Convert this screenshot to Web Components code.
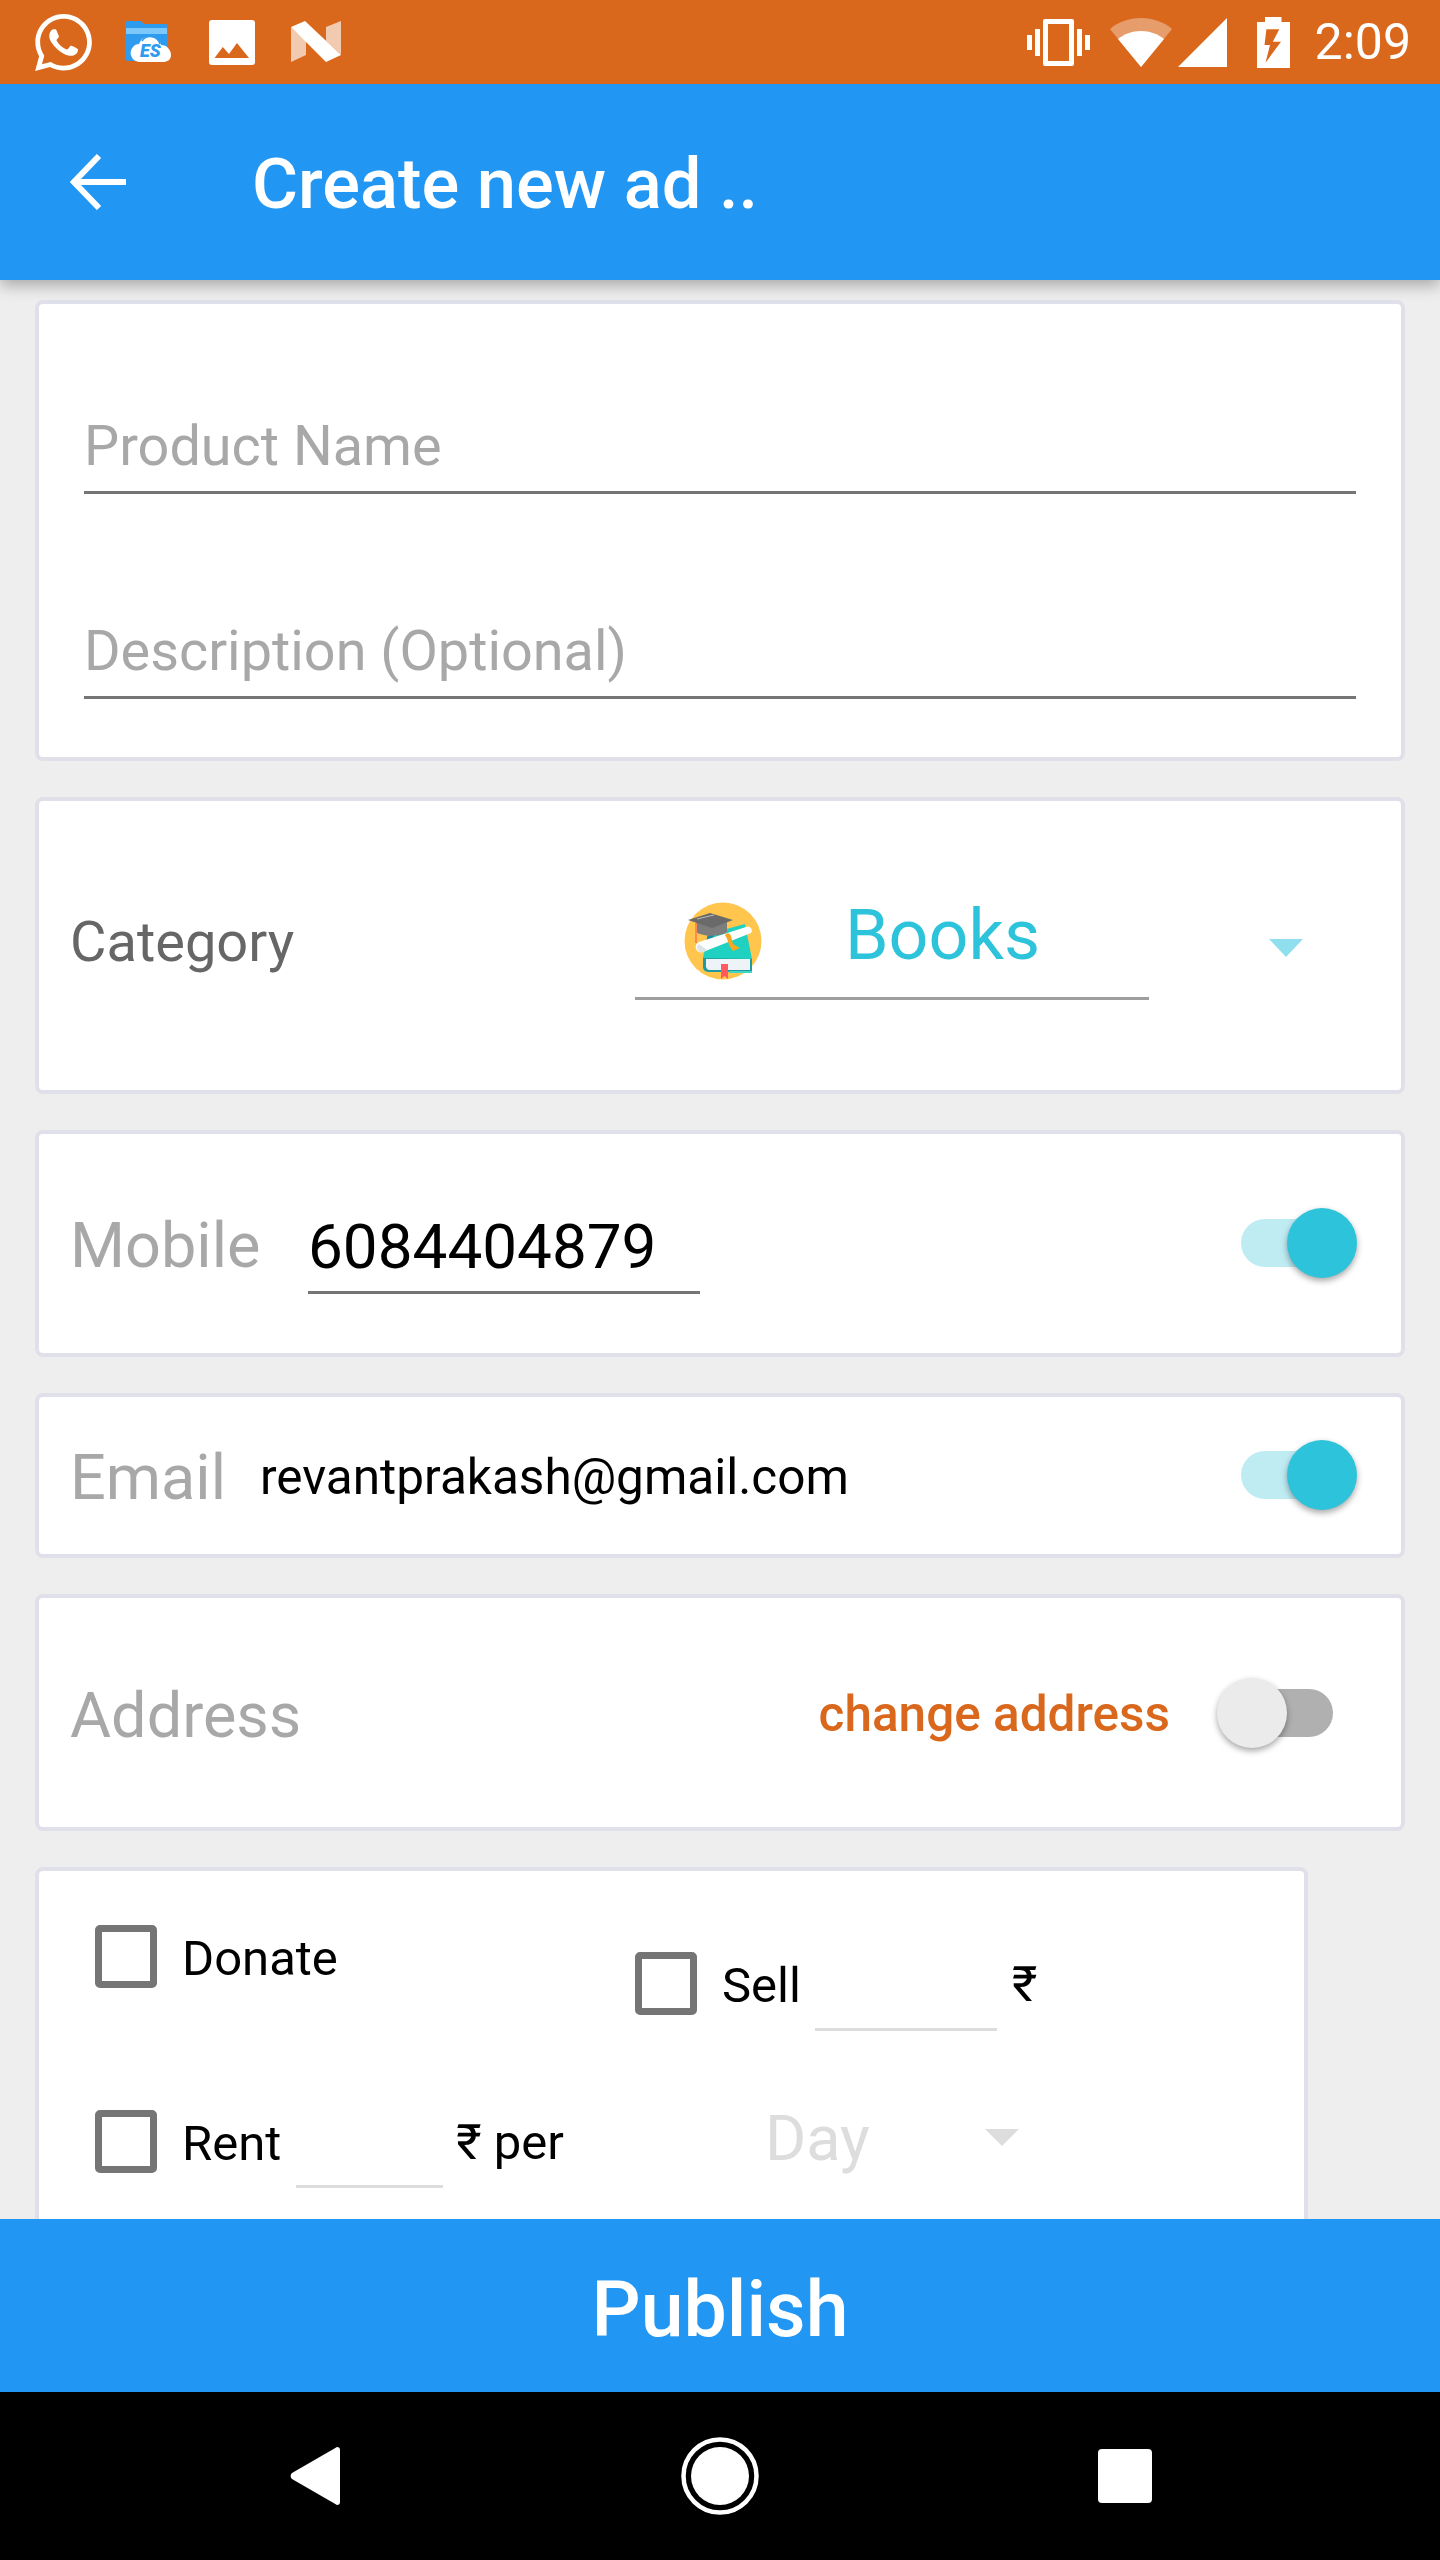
<!DOCTYPE html>
<html>
<head>
<meta charset="utf-8">
<style>
    html, body { margin: 0; padding: 0; background: #eee; }
    body { font-family: Roboto, "Noto Sans", sans-serif; }
    #phone { display: flex; flex-direction: column; width: 1440px; height: 2560px; overflow: hidden; }
    #scroll { flex: 1 1 0; min-height: 0; overflow: hidden; display: flex; flex-direction: column; gap: 36px; padding: 20px 35px 0 35px; }
</style>
</head>
<body>
<div id="phone">
    <status-bar></status-bar>
    <app-bar>Create new ad ..</app-bar>
    <div id="scroll">
        <form-card h="461">
            <text-field placeholder="Product Name" top="105"></text-field>
            <text-field placeholder="Description (Optional)" top="120"></text-field>
        </form-card>
        <category-card></category-card>
        <contact-row label="Mobile" h="227" mode="input" value="6084404879"></contact-row>
        <contact-row label="Email" h="165" mode="plain" value="revantprakash@gmail.com"></contact-row>
        <address-card></address-card>
        <offer-card></offer-card>
    </div>
    <publish-bar>Publish</publish-bar>
    <nav-bar></nav-bar>
</div>

<script>
class StatusBar extends HTMLElement {
    constructor() {
        super()
        const shadow = this.attachShadow({ mode: 'open' })
        shadow.innerHTML = `
        <style>
            :host {
                display: flex;
                align-items: center;
                position: relative;
                z-index: 3;
                flex: none;
                height: 84px;
                background: #d9681d;
                color: #fff;
                padding-left: 35px;
                box-sizing: border-box;
            }
            svg { display: block; flex: none; }
            .time { font-size: 50px; margin-left: 25px; line-height: 84px; }
            .spacer { flex: 1; }
        </style>
        <svg width="57" height="57" viewBox="2 2 20 20" fill="#fff"><path d="M12.04 2C6.58 2 2.13 6.45 2.13 11.91C2.13 13.66 2.59 15.36 3.45 16.86L2.05 22L7.3 20.62C8.75 21.41 10.38 21.83 12.04 21.83C17.5 21.83 21.95 17.38 21.95 11.92C21.95 9.27 20.92 6.78 19.05 4.91C17.18 3.03 14.69 2 12.04 2M12.05 3.67C14.25 3.67 16.31 4.53 17.87 6.09C19.42 7.65 20.28 9.72 20.28 11.92C20.28 16.46 16.58 20.15 12.04 20.15C10.56 20.15 9.11 19.76 7.85 19L7.55 18.83L4.43 19.65L5.26 16.61L5.06 16.29C4.24 15 3.8 13.47 3.8 11.91C3.81 7.37 7.5 3.67 12.05 3.67M8.53 7.33C8.37 7.33 8.1 7.39 7.87 7.64C7.65 7.89 7 8.5 7 9.71C7 10.93 7.89 12.1 8 12.27C8.14 12.44 9.76 14.94 12.25 16C12.84 16.27 13.3 16.42 13.66 16.53C14.25 16.72 14.79 16.69 15.22 16.63C15.7 16.56 16.68 16.03 16.89 15.45C17.1 14.87 17.1 14.38 17.04 14.27C16.97 14.17 16.81 14.11 16.56 14C16.31 13.86 15.09 13.26 14.87 13.18C14.64 13.1 14.5 13.06 14.31 13.3C14.15 13.55 13.67 14.11 13.53 14.27C13.38 14.44 13.24 14.46 13 14.34C12.74 14.21 11.94 13.95 11 13.11C10.26 12.45 9.77 11.64 9.62 11.39C9.5 11.15 9.61 11 9.73 10.89C9.84 10.78 10 10.6 10.1 10.45C10.23 10.31 10.27 10.2 10.35 10.04C10.43 9.87 10.39 9.73 10.33 9.61C10.27 9.5 9.77 8.26 9.56 7.77C9.36 7.29 9.16 7.35 9 7.34C8.86 7.34 8.7 7.33 8.53 7.33Z"/></svg>
        <svg width="46" height="42" viewBox="0 0 46 42" style="margin-left:33px">
            <path d="M3 0h13l3 3h21a3 3 0 0 1 3 3v34H3a3 3 0 0 1-3-3V3a3 3 0 0 1 3-3z" fill="#2f9bef"/>
            <path d="M1 7h41v6H1z" fill="#7cc8fb"/>
            <path d="M14 41a9 9 0 0 1-6-15c1-2 4-3 6-3 2-6 8-9 14-7 4 1 7 4 8 8 6 0 10 5 10 10 0 5-4 7-8 7z" fill="#fff"/>
            <path d="M17 20a10 10 0 0 1 18 3" fill="none" stroke="#2f9bef" stroke-width="1.500"/>
            <text x="15" y="36" font-family="Roboto, sans-serif" font-weight="900" font-style="italic" font-size="18" fill="#2f9bef">ES</text>
        </svg>
        <svg width="46" height="45" viewBox="0 0 46 45" style="margin-left:38px">
            <path d="M3 0h40a3 3 0 0 1 3 3v39a3 3 0 0 1-3 3H3a3 3 0 0 1-3-3V3a3 3 0 0 1 3-3z" fill="#fff"/>
            <path d="M5.500 38L13.800 27 20 34 28 23 40 38z" fill="#d9681d"/>
        </svg>
        <svg width="50" height="42" viewBox="0 0 50 42" style="margin-left:36px">
            <path d="M0 6V41L15 34V20z" fill="#fff" fill-opacity=".65"/>
            <path d="M35 6L50 0V34L35 20z" fill="#fff" fill-opacity=".65"/>
            <path d="M0 6L14 0L50 34L35 41z" fill="#fff"/>
        </svg>
        <div class="spacer"></div>
        <svg width="63" height="47" viewBox="0 0 63 47" fill="#fff">
            <path d="M0 16h5v15H0zM8 10h5v27H8zM50 10h5v27h-5zM58 16h5v15h-5z"/>
            <path fill-rule="evenodd" d="M18 0h27a2 2 0 0 1 2 2v43a2 2 0 0 1-2 2H18a2 2 0 0 1-2-2V2a2 2 0 0 1 2-2zM21 5v37h21V5z"/>
        </svg>
        <svg width="62" height="49" viewBox="0 0 62 49" style="margin-left:20px">
            <path d="M31 49L0 11C8 4 19 0 31 0s23 4 31 11z" fill="#fff" fill-opacity=".35"/>
            <path d="M31 49L8 21c6-5 14-8 23-8s17 3 23 8z" fill="#fff"/>
        </svg>
        <svg width="49" height="49" viewBox="0 0 49 49" style="margin-left:6px"><path d="M49 0v49H0z" fill="#fff"/></svg>
        <svg width="33" height="51" viewBox="0 0 33 51" style="margin-left:30px">
            <path fill-rule="evenodd" d="M8 0h16.500v5H33v46H0V5h8zM9.400 12.300H22.300L15.800 24.700H24L8.500 45.700 13 28H7.500z" fill="#fff"/>
        </svg>
        <span class="time">2:09</span>
        <div style="width:29px"></div>
        `
    }
}

class AppBar extends HTMLElement {
    constructor() {
        super()
        const shadow = this.attachShadow({ mode: 'open' })
        shadow.innerHTML = `
        <style>
            :host {
                display: flex;
                align-items: center;
                position: relative;
                z-index: 2;
                flex: none;
                height: 196px;
                background: #2196f3;
                color: #fff;
                box-shadow: 0 6px 14px rgba(0,0,0,.28);
                padding-left: 70px;
                box-sizing: border-box;
            }
            svg { display: block; flex: none; }
            .title { font-size: 70.500px; font-weight: 500; margin-left: 126px; white-space: nowrap; line-height: 80px; position: relative; top: 2px; }
        </style>
        <svg width="56" height="56" viewBox="0 0 56 56" fill="none" stroke="#fff" stroke-width="6"><path d="M56 28H4M29 2L4 28l25 26"/></svg>
        <span class="title"><slot></slot></span>
        `
    }
}

class FormCard extends HTMLElement {
    constructor() {
        super()
        const shadow = this.attachShadow({ mode: 'open' })
        shadow.innerHTML = `
        <style>
            :host {
                display: flex;
                flex-direction: column;
                flex: none;
                box-sizing: border-box;
                background: #fff;
                border: 4px solid #e0e0ea;
                border-radius: 8px;
                padding: 0 45px;
                height: var(--h);
            }
        </style>
        <slot></slot>
        `
        this.style.setProperty('--h', this.getAttribute('h') + 'px')
    }
}

class TextField extends HTMLElement {
    constructor() {
        super()
        const shadow = this.attachShadow({ mode: 'open' })
        shadow.innerHTML = `
        <style>
            :host {
                display: block;
                font-size: 55.800px;
                color: #a8a8a8;
                line-height: 74px;
                border-bottom: 3px solid #757575;
                height: 82px;
                margin-top: var(--top);
            }
        </style>
        <span>${this.getAttribute('placeholder')}</span>
        `
        this.style.setProperty('--top', this.getAttribute('top') + 'px')
    }
}

class CategoryCard extends HTMLElement {
    constructor() {
        super()
        const shadow = this.attachShadow({ mode: 'open' })
        shadow.innerHTML = `
        <style>
            :host {
                display: flex;
                align-items: center;
                flex: none;
                box-sizing: border-box;
                height: 297px;
                background: #fff;
                border: 4px solid #e0e0ea;
                border-radius: 8px;
                padding-left: 31px;
            }
            .label { font-size: 56px; color: #666; width: 565px; flex: none; position: relative; top: -4px; }
            .spinner { display: flex; align-items: center; width: 514px; height: 107px; box-sizing: border-box; border-bottom: 3px solid #9e9e9e; padding-left: 49px; flex: none; position: relative; top: 1px; }
            svg { display: block; flex: none; }
            .value { font-size: 70px; color: #2dc3db; margin-left: 83px; position: relative; top: -10px; }
            .arrow { width: 0; height: 0; border-left: 17px solid transparent; border-right: 17px solid transparent; border-top: 18px solid #8fdfee; margin-left: 120px; flex: none; position: relative; top: 2px; }
        </style>
        <span class="label">Category</span>
        <div class="spinner">
            <svg width="78" height="78" viewBox="0 0 78 78" style="position:relative;top:-4px">
                <circle cx="39" cy="39" r="38.500" fill="#ffc54d"/>
                <path d="M19 56h49v14H24a5 5 0 0 1-5-5z" fill="#1f9aa0"/>
                <path d="M22 57h44v11H26a4 4 0 0 1-4-5z" fill="#eef3f7"/>
                <path d="M68 69v2H45v-2z" fill="#3fd6c8"/>
                <path d="M19 56L24 32 61 22 68 57z" fill="#1fd1c0"/>
                <path d="M21 44L24 32 30 30 29 42z" fill="#1a8a9c"/>
                <path d="M15 40L62 25a4 4 0 0 1 5 6L19 50a5 5 0 0 1-4-10z" fill="#fff"/>
                <path d="M15 42a4.500 4.500 0 0 0 4 8l4-2z" fill="#dde3e6"/>
                <path d="M41 33c2-3 5-2 6 1l2 8 7 4-7 3-4-6c-1-4-2-7-4-10z" fill="#f6a821"/>
                <path d="M37 62h7v15l-3.500-3-3.500 3z" fill="#ff5a5f"/>
                <path d="M12 20h31v10c-7 5-24 5-31 0z" fill="#7d7d7d"/>
                <path d="M4 18L26 11 49 18 28 26z" fill="#6a6a6a"/>
                <path d="M13 17l17-4" stroke="#bbb" stroke-width="1"/>
                <path d="M12 21v20" stroke="#ff8a50" stroke-width="2"/>
            </svg>
            <span class="value">Books</span>
        </div>
        <span class="arrow"></span>
        `
    }
}

class ToggleSwitch extends HTMLElement {
    constructor() {
        super()
        const on = this.hasAttribute('on')
        const shadow = this.attachShadow({ mode: 'open' })
        shadow.innerHTML = `
        <style>
            :host {
                display: block;
                position: relative;
                flex: none;
                width: 100px;
                height: 48px;
                border-radius: 24px;
                background: ${on ? '#bfecf3' : '#b0b0b0'};
            }
            .thumb {
                position: absolute;
                top: -11px;
                ${on ? 'right' : 'left'}: -16px;
                width: 70px;
                height: 70px;
                border-radius: 50%;
                background: ${on ? '#2dc3db' : '#ebebeb'};
                box-shadow: 0 3px 6px rgba(0,0,0,.35);
            }
        </style>
        <div class="thumb"></div>
        `
    }
}

class ContactRow extends HTMLElement {
    constructor() {
        super()
        const input = this.getAttribute('mode') === 'input'
        const shadow = this.attachShadow({ mode: 'open' })
        shadow.innerHTML = `
        <style>
            :host {
                display: flex;
                align-items: center;
                flex: none;
                box-sizing: border-box;
                height: ${this.getAttribute('h')}px;
                background: #fff;
                border: 4px solid #e0e0ea;
                border-radius: 8px;
                padding-left: 31px;
            }
            .label { font-size: 63px; color: #a8a8a8; flex: none; width: ${input ? 238 : 190}px; position: relative; top: 2px; }
            .value { color: #000; flex: none; }
            .input { font-size: 62px; width: 392px; height: 92px; line-height: 90px; box-sizing: border-box; border-bottom: 3px solid #757575; position: relative; top: 4px; }
            .plain { font-size: 49.500px; position: relative; top: 1px; }
            .gap { flex: 1; }
            toggle-switch { margin-right: 60px; position: relative; top: -1px; }
        </style>
        <span class="label">${this.getAttribute('label')}</span>
        <span class="value ${input ? 'input' : 'plain'}">${this.getAttribute('value')}</span>
        <div class="gap"></div>
        <toggle-switch on></toggle-switch>
        `
    }
}

class AddressCard extends HTMLElement {
    constructor() {
        super()
        const shadow = this.attachShadow({ mode: 'open' })
        shadow.innerHTML = `
        <style>
            :host {
                display: flex;
                align-items: center;
                flex: none;
                box-sizing: border-box;
                height: 237px;
                background: #fff;
                border: 4px solid #e0e0ea;
                border-radius: 8px;
                padding-left: 31px;
            }
            .label { font-size: 63px; color: #a8a8a8; flex: 1; position: relative; top: 3px; }
            .link { font-size: 49.500px; font-weight: 500; color: #d9681d; flex: none; position: relative; top: 1px; }
            toggle-switch { margin: 0 68px 0 63px; }
        </style>
        <span class="label">Address</span>
        <span class="link">change address</span>
        <toggle-switch></toggle-switch>
        `
    }
}

class CheckItem extends HTMLElement {
    constructor() {
        super()
        const shadow = this.attachShadow({ mode: 'open' })
        shadow.innerHTML = `
        <style>
            :host { display: flex; align-items: center; flex: none; font-size: 49px; color: #000; }
            .box { width: 62px; height: 63px; box-sizing: border-box; border: 7px solid #757575; border-radius: 5px; flex: none; margin-right: 25px; }
            span { position: relative; top: 2px; }
        </style>
        <div class="box"></div>
        <span><slot></slot></span>
        `
    }
}

class OfferCard extends HTMLElement {
    constructor() {
        super()
        const shadow = this.attachShadow({ mode: 'open' })
        shadow.innerHTML = `
        <style>
            :host {
                display: block;
                flex: none;
                box-sizing: border-box;
                width: 1273px;
                height: 460px;
                background: #fff;
                border: 4px solid #e0e0ea;
                border-radius: 8px;
                font-size: 49px;
                color: #000;
            }
            .row { display: flex; align-items: flex-start; }
            .row1 { margin-top: 54px; padding-left: 56px; }
            .row2 { margin-top: 90px; padding-left: 56px; align-items: center; }
            .sell { display: flex; align-items: center; margin-top: 27px; }
            .blank { border-bottom: 3px solid #ddd; height: 60px; box-sizing: border-box; flex: none; position: relative; top: 17px; }
            .rupee { flex: none; position: relative; top: 1px; }
            .day { font-size: 63px; color: #ddd; flex: none; position: relative; top: -3px; }
            .arrow { width: 0; height: 0; border-left: 17px solid transparent; border-right: 17px solid transparent; border-top: 17px solid #ddd; flex: none; position: relative; top: -4px; }
        </style>
        <div class="row row1">
            <check-item style="width:540px">Donate</check-item>
            <div class="sell">
                <check-item>Sell</check-item>
                <div class="blank" style="width:182px;margin-left:14px"></div>
                <span class="rupee" style="margin-left:15px">₹</span>
            </div>
        </div>
        <div class="row row2">
            <check-item>Rent</check-item>
            <div class="blank" style="width:147px;margin-left:15px;top:16px"></div>
            <span class="rupee" style="margin-left:13px">₹ per</span>
            <span class="day" style="margin-left:201px">Day</span>
            <span class="arrow" style="margin-left:115px"></span>
        </div>
        `
    }
}

class PublishBar extends HTMLElement {
    constructor() {
        super()
        const shadow = this.attachShadow({ mode: 'open' })
        shadow.innerHTML = `
        <style>
            :host {
                display: flex;
                align-items: center;
                justify-content: center;
                flex: none;
                height: 173px;
                background: #2196f3;
                color: #fff;
                font-size: 77px;
                font-weight: 500;
                padding-top: 8px;
                box-sizing: border-box;
            }
        </style>
        <slot></slot>
        `
    }
}

class NavBar extends HTMLElement {
    constructor() {
        super()
        const shadow = this.attachShadow({ mode: 'open' })
        shadow.innerHTML = `
        <style>
            :host {
                display: flex;
                align-items: center;
                flex: none;
                height: 168px;
                background: #000;
                padding-left: 290px;
                box-sizing: border-box;
            }
            svg { display: block; flex: none; }
        </style>
        <svg width="50" height="58" viewBox="0 0 50 58"><path d="M47 0a3 3 0 0 1 3 3v52a3 3 0 0 1-3 3L2 32a4 4 0 0 1 0-6z" fill="#fff"/></svg>
        <svg width="78" height="78" viewBox="0 0 78 78" style="margin-left:341px">
            <circle cx="39" cy="39" r="36.500" fill="none" stroke="#fff" stroke-width="4.500"/>
            <circle cx="39" cy="39" r="29" fill="#fff"/>
        </svg>
        <svg width="54" height="54" viewBox="0 0 54 54" style="margin-left:339px"><rect width="54" height="54" rx="4" fill="#fff"/></svg>
        `
    }
}

customElements.define('status-bar', StatusBar)
customElements.define('app-bar', AppBar)
customElements.define('form-card', FormCard)
customElements.define('text-field', TextField)
customElements.define('category-card', CategoryCard)
customElements.define('toggle-switch', ToggleSwitch)
customElements.define('contact-row', ContactRow)
customElements.define('address-card', AddressCard)
customElements.define('check-item', CheckItem)
customElements.define('offer-card', OfferCard)
customElements.define('publish-bar', PublishBar)
customElements.define('nav-bar', NavBar)
</script>
</body>
</html>
